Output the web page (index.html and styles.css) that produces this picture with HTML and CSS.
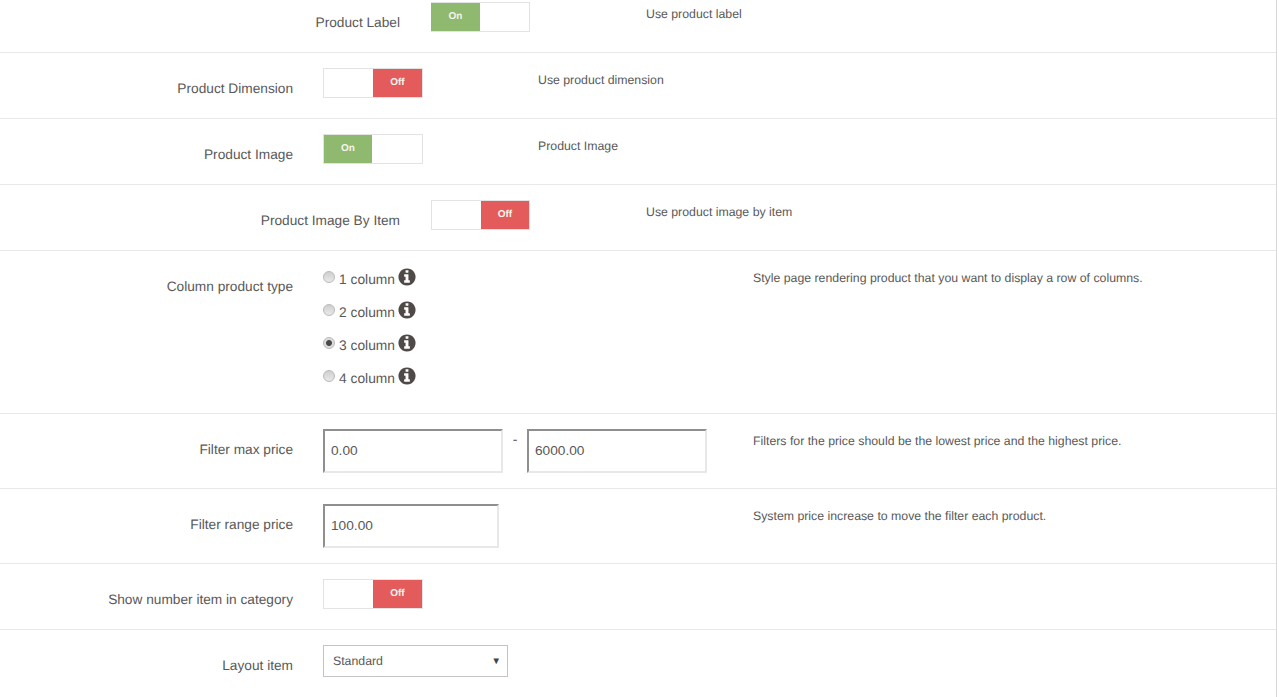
FILE: index.html
```html
<!DOCTYPE html>
<html lang="en">
<head>
<meta charset="utf-8">
<title>Product settings</title>
<link rel="stylesheet" href="styles.css">
</head>
<body>
<svg class="defs" width="0" height="0" aria-hidden="true">
  <symbol id="info" viewBox="0 0 1792 1792"><path d="M1152 1376v-160q0-14-9-23t-23-9h-96v-512q0-14-9-23t-23-9h-320q-14 0-23 9t-9 23v160q0 14 9 23t23 9h96v320h-96q-14 0-23 9t-9 23v160q0 14 9 23t23 9h448q14 0 23-9t9-23zm-128-896v-160q0-14-9-23t-23-9h-192q-14 0-23 9t-9 23v160q0 14 9 23t23 9h192q14 0 23-9t9-23zm640 416q0 209-103 385.5t-279.5 279.5-385.5 103-385.5-103-279.5-279.5-103-385.5 103-385.5 279.5-279.5 385.5-103 385.5 103 279.5 279.5 103 385.5z"/></symbol>
</svg>
<main class="form">
  <div class="row row-first row-wide">
    <div class="label">Product Label</div>
    <div class="control"><div class="toggle"><span class="knob on">On</span><span class="blank"></span></div></div>
    <div class="desc">Use product label</div>
  </div>
  <div class="row">
    <div class="label">Product Dimension</div>
    <div class="control"><div class="toggle"><span class="blank"></span><span class="knob off">Off</span></div></div>
    <div class="desc">Use product dimension</div>
  </div>
  <div class="row">
    <div class="label">Product Image</div>
    <div class="control"><div class="toggle"><span class="knob on">On</span><span class="blank"></span></div></div>
    <div class="desc">Product Image</div>
  </div>
  <div class="row row-wide">
    <div class="label">Product Image By Item</div>
    <div class="control"><div class="toggle"><span class="blank"></span><span class="knob off">Off</span></div></div>
    <div class="desc">Use product image by item</div>
  </div>
  <div class="row row-long row-radios">
    <div class="label">Column product type</div>
    <div class="control radios">
      <label class="radio"><input type="radio" name="col"><span>1 column</span><svg class="info"><use href="#info"/></svg></label>
      <label class="radio"><input type="radio" name="col"><span>2 column</span><svg class="info"><use href="#info"/></svg></label>
      <label class="radio"><input type="radio" name="col" checked><span>3 column</span><svg class="info"><use href="#info"/></svg></label>
      <label class="radio"><input type="radio" name="col"><span>4 column</span><svg class="info"><use href="#info"/></svg></label>
    </div>
    <div class="desc">Style page rendering product that you want to display a row of columns.</div>
  </div>
  <div class="row row-long row-input">
    <div class="label">Filter max price</div>
    <div class="control range">
      <input class="field field-a" type="text" value="0.00">
      <span class="dash">-</span>
      <input class="field field-b" type="text" value="6000.00">
    </div>
    <div class="desc">Filters for the price should be the lowest price and the highest price.</div>
  </div>
  <div class="row row-long row-input">
    <div class="label">Filter range price</div>
    <div class="control"><input class="field field-c" type="text" value="100.00"></div>
    <div class="desc">System price increase to move the filter each product.</div>
  </div>
  <div class="row">
    <div class="label">Show number item in category</div>
    <div class="control"><div class="toggle"><span class="blank"></span><span class="knob off">Off</span></div></div>
  </div>
  <div class="row row-last">
    <div class="label">Layout item</div>
    <div class="control">
      <div class="select"><span>Standard</span><span class="caret">▼</span></div>
    </div>
  </div>
</main>
</body>
</html>
```
FILE: styles.css
```css
html, body {
  margin: 0;
  padding: 0;
  background: #fff;
  overflow: hidden;
}
body {
  width: 1277px;
  height: 697px;
  font-family: "Liberation Sans", Arial, sans-serif;
  color: #595959;
  box-sizing: border-box;
  border-right: 1px solid #d8d8d8;
  text-rendering: geometricPrecision;
}
.defs { position: absolute; }
.row {
  --label: 293px;
  --control: 215px;
  --gap: 30px;
  --toggle: 100px;
  --on: 48px;
  --on-shift: 0px;
  --off: 49px;
  display: flex;
  align-items: flex-start;
  box-sizing: border-box;
  height: 66px;
  padding-top: 15px;
  border-bottom: 1px solid #e9e9e9;
}
.row-wide {
  --label: 400px;
  --gap: 31px;
  --toggle: 99px;
  --on: 49px;
  --on-shift: -1px;
  --off: 48px;
}
.row-long { --control: 430px; }
.row-first { height: 53px; padding-top: 2px; }
.row-radios { height: 163px; padding-top: 15px; }
.row-input { height: 75px; padding-top: 15px; }
.row-last { border-bottom: 0; }
.label {
  width: var(--label);
  flex: none;
  box-sizing: border-box;
  text-align: right;
  font-size: 13.7px;
  line-height: 20px;
  padding-top: 11px;
}
.control {
  width: var(--control);
  flex: none;
  margin-left: var(--gap);
  box-sizing: border-box;
}
.desc {
  font-size: 12.3px;
  line-height: 20px;
  padding-top: 2px;
}
.toggle {
  display: flex;
  width: var(--toggle);
  height: 30px;
  box-sizing: border-box;
  border: 1px solid #e3e3e3;
  font-size: 10px;
  font-weight: 700;
}
.knob {
  height: 28px;
  flex: none;
  color: #f4f4ee;
  text-align: center;
  line-height: 28px;
}
.blank { flex: 1; }
.on {
  width: var(--on);
  margin-left: var(--on-shift);
  background: #8fb96f;
}
.off {
  width: var(--off);
  background: #e35b5a;
}
.radios {
  display: flex;
  flex-direction: column;
  gap: 9px;
}
.radio {
  display: flex;
  align-items: center;
  height: 24px;
  font-size: 13.8px;
}
.radio input {
  appearance: none;
  width: 12px;
  height: 12px;
  margin: 0 4px 2px 0;
  border: 1px solid #b9b9b9;
  border-radius: 50%;
  background: linear-gradient(#cfcfcf, #e9e9e9);
}
.radio input:checked {
  background: radial-gradient(circle, #4a4a4a 0 2.5px, #dcdcdc 3.5px);
}
.radio span { padding-top: 2px; }
.info {
  width: 20px;
  height: 20px;
  margin: 0 0 3px 2px;
  fill: #4f4a47;
}
.range {
  display: flex;
  align-items: flex-start;
}
.field {
  display: block;
  box-sizing: border-box;
  height: 44px;
  padding: 0 6px 2px;
  border: 2px solid;
  border-color: #8f8f8f #e8e8e8 #e8e8e8 #8f8f8f;
  background: #fff;
  color: #595959;
  font: 13.7px "Liberation Sans", Arial, sans-serif;
  outline: 0;
  border-radius: 0;
}
.field-a { width: 180px; }
.field-b { width: 180px; }
.field-c { width: 176px; }
.dash {
  width: 24px;
  text-align: center;
  font-size: 14px;
  line-height: 20px;
}
.select {
  display: flex;
  justify-content: space-between;
  align-items: center;
  box-sizing: border-box;
  width: 185px;
  height: 32px;
  padding: 0 6px 0 9px;
  border: 1px solid #c4c4c4;
  font-size: 12.3px;
}
.caret { font-size: 9.5px; color: #444; }
```
